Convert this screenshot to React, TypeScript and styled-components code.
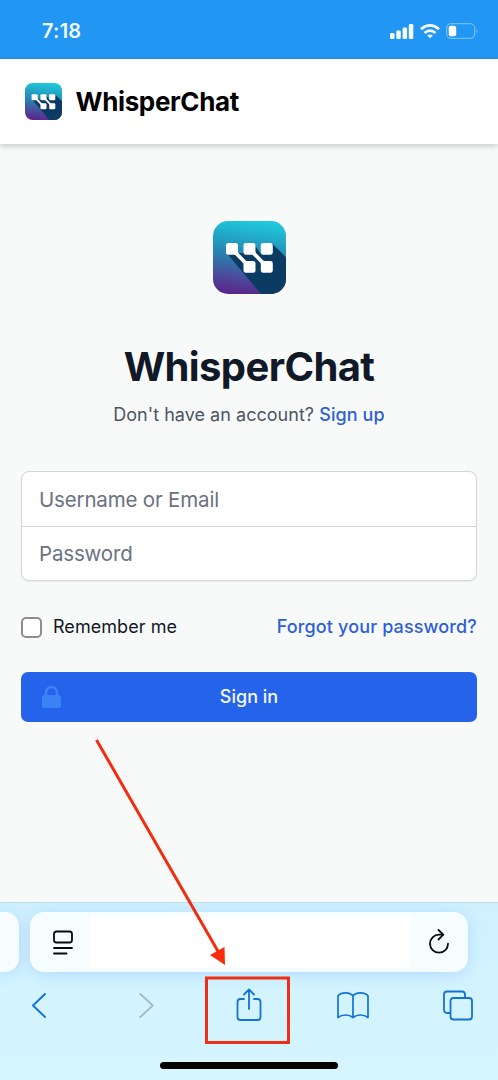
import React from "react";
import styled, { createGlobalStyle } from "styled-components";

const Global = createGlobalStyle`
  *, *::before, *::after { box-sizing: border-box; }
  body { margin: 0; background: #f8f9f9; font-family: Inter, "Liberation Sans", sans-serif; }
  svg { display: block; flex: none; overflow: visible; }
`;

const Screen = styled.div`
  position: relative;
  display: flex;
  flex-direction: column;
  width: 498px;
  height: 1080px;
  overflow: hidden;
  background: #f8faf9;
`;

const StatusBar = styled.div`
  display: flex;
  align-items: center;
  justify-content: space-between;
  height: 59px;
  padding: 3px 19px 0 42px;
  background: #2196f3;
  color: #f0fbff;
`;

const Time = styled.span`
  font-size: 20px;
  font-weight: 600;
  line-height: 24px;
  letter-spacing: 0.2px;
`;

const StatusIcons = styled.div`
  display: flex;
  align-items: center;
  gap: 6px;
`;

const Header = styled.header`
  z-index: 1;
  display: flex;
  align-items: center;
  gap: 14px;
  height: 85px;
  padding: 0 24.5px;
  background: #fff;
  box-shadow: 0 2px 6px rgba(0, 0, 0, 0.2);
`;

const Brand = styled.span`
  font-size: 26px;
  font-weight: 650;
  line-height: 32px;
  letter-spacing: -0.35px;
  color: #000;
`;

const Main = styled.main`
  display: flex;
  flex: none;
  flex-direction: column;
  align-items: center;
  height: 758px;
  padding: 77px 21px 0;
`;

const Title = styled.h1`
  margin: 48px 0 0;
  font-size: 40px;
  font-weight: 700;
  line-height: 50px;
  letter-spacing: -0.6px;
  color: #111827;
`;

const Prompt = styled.p`
  margin: 11px 0 0;
  font-size: 18px;
  line-height: 24px;
  letter-spacing: 0.03px;
  color: #4b5563;
`;

const Link = styled.a<{ $track?: number }>`
  font-size: 18px;
  font-weight: 500;
  line-height: 24px;
  letter-spacing: ${(p) => p.$track ?? 0}px;
  color: #2f5fd6;
`;

const Form = styled.form`
  display: flex;
  flex-direction: column;
  width: 100%;
  margin-top: 44px;
`;

const Fields = styled.div`
  height: 110px;
  border: 1px solid #d3d6da;
  border-radius: 8px;
  background: #fff;
  box-shadow: 0 1px 2px rgba(0, 0, 0, 0.06);
  overflow: hidden;
`;

const Field = styled.input`
  display: block;
  width: 100%;
  height: 54px;
  padding: 0 17px;
  border: 0;
  background: transparent;
  font: 400 20.5px/26px Inter, "Liberation Sans", sans-serif;
  letter-spacing: -0.17px;
  outline: 0;
  &::placeholder { color: #6b7280; opacity: 1; }
  & + & { border-top: 1px solid #d3d6da; }
`;

const Options = styled.div`
  display: flex;
  align-items: center;
  justify-content: space-between;
  height: 24px;
  margin-top: 34px;
`;

const Remember = styled.label`
  display: flex;
  align-items: center;
  gap: 11px;
  font-size: 18px;
  line-height: 24px;
  letter-spacing: 0.05px;
  color: #111827;
`;

const Box = styled.span`
  width: 21px;
  height: 21px;
  border: 2px solid #8d8d8d;
  border-radius: 5px;
  background: #fff;
`;

const SignIn = styled.button`
  display: grid;
  grid-template-columns: 60px 1fr 60px;
  align-items: center;
  height: 50px;
  margin-top: 33px;
  padding: 0;
  border: 0;
  border-radius: 7px;
  background: #2563eb;
  color: #f3f8ff;
  font: 500 18px/24px Inter, "Liberation Sans", sans-serif;
`;

const LockSlot = styled.span`
  padding-left: 21px;
`;

const BrowserBar = styled.footer`
  display: flex;
  flex: none;
  flex-direction: column;
  height: 178px;
  padding-top: 9px;
  border-top: 1px solid #c3dce7;
  background: linear-gradient(#cff1ff, #d3f4ff 60%, #d5f5ff);
`;

const Tabs = styled.div`
  display: flex;
  gap: 11px;
`;

const PreviousTab = styled.div`
  width: 19px;
  height: 60px;
  border-radius: 0 14px 14px 0;
  background: #f6fdff;
  box-shadow: 0 2px 14px rgba(120, 170, 255, 0.35);
`;

const AddressBar = styled.div`
  display: flex;
  align-items: center;
  width: 438px;
  height: 60px;
  padding: 0 17px 0 22px;
  border-radius: 14px;
  background: #f6fdff;
  box-shadow: 0 2px 14px rgba(120, 170, 255, 0.35);
`;

const Address = styled.div`
  width: 321px;
  height: 52px;
  margin: 0 17px 0 16px;
  background: #fff;
`;

const Toolbar = styled.nav`
  display: flex;
  align-items: flex-start;
  justify-content: space-between;
  height: 90px;
  padding: 16px 23px 0 22px;
`;

const ToolButton = styled.span<{ $color?: string }>`
  display: flex;
  justify-content: center;
  width: 34px;
  color: ${(p) => p.$color ?? "#1272d6"};
`;

const HomeIndicator = styled.div`
  width: 178px;
  height: 7px;
  margin: 0 auto;
  border-radius: 4px;
  background: #000;
`;

const Annotation = styled.svg`
  position: absolute;
  inset: 0;
  pointer-events: none;
`;

function Logo({ size, id }: { size: number; id: string }) {
  return (
    <svg width={size} height={size} viewBox="0 0 73 73">
      <defs>
        <linearGradient id={id + "g"} x1="0.55" y1="0" x2="0.42" y2="1">
          <stop offset="0" stopColor="#20c9dc" />
          <stop offset="0.45" stopColor="#2389b2" />
          <stop offset="0.78" stopColor="#4b4c9b" />
          <stop offset="1" stopColor="#5a278c" />
        </linearGradient>
        <clipPath id={id + "c"}>
          <rect width="73" height="73" rx="15" />
        </clipPath>
      </defs>
      <g clipPath={`url(#${id}c)`}>
        <rect width="73" height="73" fill={`url(#${id}g)`} />
        <path d="M14 32.500 53 79H80V43L59 22.500 48 33 41 23 31 32Z" fill="#0b3b62" />
        <path d="m19 28 17.500 18M36.500 28 54 46" stroke="#fff" strokeWidth="3.800" />
        <g fill="#fff">
          <rect x="13" y="22" width="12" height="11.800" rx="2.400" />
          <rect x="30.500" y="22" width="12" height="11.800" rx="2.400" />
          <rect x="47.800" y="22" width="12" height="11.800" rx="2.400" />
          <rect x="30.500" y="40" width="12" height="11.800" rx="2.400" />
          <rect x="47.800" y="40" width="12" height="11.800" rx="2.400" />
        </g>
      </g>
    </svg>
  );
}

export default function App() {
  return (
    <>
      <Global />
      <Screen>
        <StatusBar>
          <Time>7:18</Time>
          <StatusIcons>
            <svg width="24" height="15" viewBox="0 0 24 15" fill="#f4fcff">
              <rect x="0" y="9" width="4.500" height="6" rx="1.300" />
              <rect x="6.300" y="6.500" width="4.500" height="8.500" rx="1.300" />
              <rect x="12.600" y="3.500" width="4.500" height="11.500" rx="1.300" />
              <rect x="18.800" y="0" width="4.500" height="15" rx="1.300" />
            </svg>
            <svg width="20" height="15" viewBox="0 0 20 15" fill="none" stroke="#f4fcff" strokeWidth="2.800">
              <path d="M1 5.200Q10-2.400 19 5.200M4.500 9Q10 4.300 15.500 9" />
              <path d="M7.200 11.500Q10 9.300 12.800 11.500L10 14.300Z" fill="#f4fcff" stroke="none" />
            </svg>
            <svg width="33" height="16" viewBox="0 0 33 16" fill="none">
              <rect x="0.700" y="0.700" width="28" height="14.600" rx="4.500" stroke="#6dbff9" strokeWidth="1.300" />
              <rect x="2.700" y="2.700" width="7.500" height="10.600" rx="2" fill="#fff" />
              <path d="M30.700 5.300Q32.500 8 30.700 10.700Z" fill="#83c9fa" />
            </svg>
          </StatusIcons>
        </StatusBar>
        <Header>
          <Logo size={37} id="small" />
          <Brand>WhisperChat</Brand>
        </Header>
        <Main>
          <Logo size={73} id="large" />
          <Title>WhisperChat</Title>
          <Prompt>
            Don't have an account? <Link $track={0.1}>Sign up</Link>
          </Prompt>
          <Form>
            <Fields>
              <Field placeholder="Username or Email" />
              <Field placeholder="Password" />
            </Fields>
            <Options>
              <Remember>
                <Box />
                Remember me
              </Remember>
              <Link $track={0.13}>Forgot your password?</Link>
            </Options>
            <SignIn type="button">
              <LockSlot>
                <svg width="19" height="22" viewBox="0 0 19 22">
                  <path d="M4 10V6.500a5.500 5.500 0 0 1 11 0V10" fill="none" stroke="#3b82f6" strokeWidth="2.500" />
                  <rect y="9" width="19" height="13" rx="2.500" fill="#3b82f6" />
                </svg>
              </LockSlot>
              <span>Sign in</span>
            </SignIn>
          </Form>
        </Main>
        <BrowserBar>
          <Tabs>
            <PreviousTab />
            <AddressBar>
              <svg width="22" height="25" viewBox="0 0 22 25" fill="none" stroke="#050b0d" strokeWidth="1.800" strokeLinecap="round">
                <rect x="2" y="1.500" width="18" height="11" rx="2.500" />
                <path d="M2 18H20M2 23.500H14.500" />
              </svg>
              <Address />
              <svg width="22" height="26" viewBox="0 0 22 26" fill="none" stroke="#050b0d" strokeWidth="1.800" strokeLinecap="round" strokeLinejoin="round">
                <path d="M14 5.700H11A9 9 0 1 0 20 14.700" />
                <path d="M10.500 1 15.300 5.700 10.500 10.500" />
              </svg>
            </AddressBar>
          </Tabs>
          <Toolbar>
            <ToolButton>
              <svg width="20" height="34" viewBox="0.500 0 20 34" fill="none" stroke="currentColor" strokeWidth="1.900" strokeLinecap="round" strokeLinejoin="round">
                <path d="M16.500 6 4.500 17.500 16.500 29" />
              </svg>
            </ToolButton>
            <ToolButton $color="#a3bcc5">
              <svg width="20" height="34" viewBox="-2.300 0 20 34" fill="none" stroke="currentColor" strokeWidth="1.900" strokeLinecap="round" strokeLinejoin="round">
                <path d="M4 6 16.500 17.500 4 29" />
              </svg>
            </ToolButton>
            <ToolButton>
              <svg width="28" height="34" viewBox="0 0 28 34" fill="none" stroke="currentColor" strokeWidth="1.800" strokeLinecap="round" strokeLinejoin="round">
                <path d="M9 11H5.500A3 3 0 0 0 2.500 14V29A3 3 0 0 0 5.500 32H22.500A3 3 0 0 0 25.500 29V14A3 3 0 0 0 22.500 11H19" />
                <path d="M14 21V2M9 6.500 14 1.500 19 6.500" />
              </svg>
            </ToolButton>
            <ToolButton>
              <svg width="34" height="34" viewBox="0 0 34 34" fill="none" stroke="currentColor" strokeWidth="1.700" strokeLinejoin="round">
                <path d="M17 8Q15 4.800 9.500 4.800 4 4.800 2 8V29.500Q5 27 9.500 27 14 27 17 29.500 20 27 24.500 27 29 27 32 29.500V8Q30 4.800 24.500 4.800 19 4.800 17 8V29.500" />
              </svg>
            </ToolButton>
            <ToolButton>
              <svg width="32" height="34" viewBox="0.500 0 32 34" fill="none" stroke="currentColor" strokeWidth="1.800">
                <path d="M8.500 25H5.500A3 3 0 0 1 2.500 22V6.500A3 3 0 0 1 5.500 3.500H20.500A3 3 0 0 1 23.500 6.500V10" />
                <rect x="9" y="10" width="21.500" height="21.500" rx="3" />
              </svg>
            </ToolButton>
          </Toolbar>
          <HomeIndicator />
        </BrowserBar>
        <Annotation width="498" height="1080" viewBox="0 0 498 1080">
          <path d="M96.500 740 219 953" stroke="#f42c0f" strokeWidth="3" />
          <path d="M210 955 224.500 947 225 965Z" fill="#f92d0c" />
          <rect x="206.500" y="978" width="82" height="64.500" fill="none" stroke="#ef2f14" strokeWidth="3" />
        </Annotation>
      </Screen>
    </>
  );
}
